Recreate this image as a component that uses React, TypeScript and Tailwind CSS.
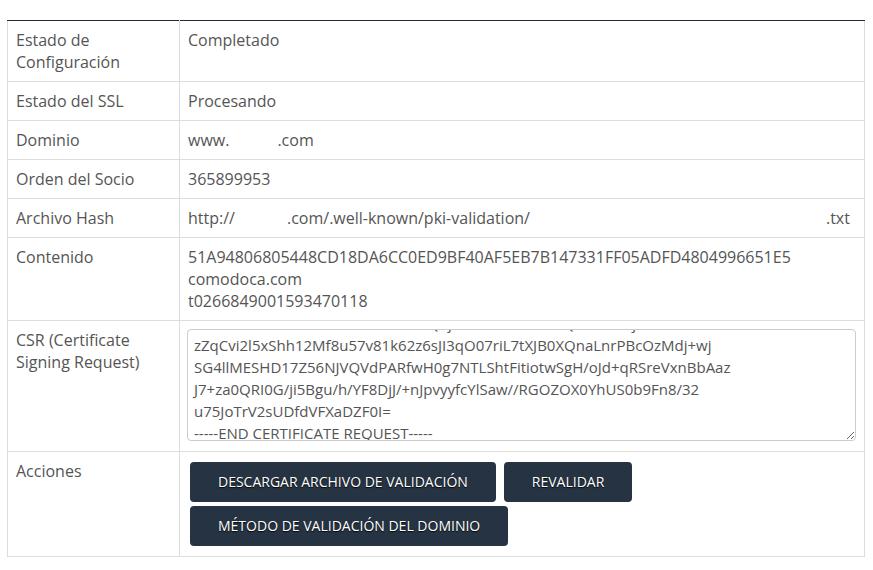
import { useEffect, useRef } from 'react';

const csrLines = [
  '-----BEGIN CERTIFICATE REQUEST-----',
  'MIICvDCCAaQCAQAwdzELMAkGA1UEBhMCRVMxDzANBgNVBAgMBk1hZHJpZDEPMA0G',
  'A1UEBwwGTWFkcmlkMRcwFQYDVQQKDA5FamVtcGxvIFMuTC4xFDASBgNVBAsMC0lU',
  'IERlcGFydG1lbnQxFzAVBgNVBAMMDnd3dy5leGFtcGxlLmNvbTCCASIwDQYJKoZI',
  'hvcNAQEBBQADggEPADCCAQoCggEBAMzR1k2d8Xq7PZs0Yb3nQpV9fWk4tLm2aH6j',
  'Ue1Ko8Gf3sNw0Rz5cY7iDqT2pLbXv9Mn4HjKa1SdF6gZeW3yRt8uIo0pQa2Bc4Ev',
  'Nm7xLk5Jh3Gf9Dd2Sa1Qw8Ee6Rr4Tt0Yy3Uu7Ii5Oo9Pp2Aa6Ss1Dd4Ff8Gg0Hh',
  'Jj3Kk7Ll1Zz5Xx9Cc2Vv6Bb0Nn4Mm8Qq1Ww5Ee9Rr3Tt7Yy1Uu5Ii9Oo3Pp7Aa1S',
  's5Dd9Ff3Gg7Hh1Jj5Kk9Ll3Zz7Xx1Cc5Vv9Bb3Nn7Mm1Qq5Ww9Ee3Rr7Tt1Yy5U',
  'u9Ii3Oo7Pp1Aa5Ss9Dd3Ff7Gg1Hh5Jj9Kk3Ll7Zz1Xx5Cc9Vv3Bb7Nn1Mm5Qq9W',
  'w3Ee7Rr1Tt5Yy9Uu3Ii7Oo1Pp5AgMBAAGgADANBgkqhkiG9w0BAQsFAAOCAQEAhG',
  'YVlXlVllvG0OGNoNZ0BcOlV0lBl0BQ0jOOAIXAEuxFAMQYHlYd0SjlZVkbGXKFAbG',
  'zZqCvi2l5xShh12Mf8u57v81k62z6sJI3qO07riL7tXJB0XQnaLnrPBcOzMdj+wj',
  'SG4llMESHD17Z56NJVQVdPARfwH0g7NTLShtFitiotwSgH/oJd+qRSreVxnBbAaz',
  'J7+za0QRI0G/ji5Bgu/h/YF8DjJ/+nJpvyyfcYlSaw//RGOZOX0YhUS0b9Fn8/32',
  'u75JoTrV2sUDfdVFXaDZF0I=',
  '-----END CERTIFICATE REQUEST-----',
];

const btn =
  'h-[40px] px-[28px] rounded-[4px] bg-[#253342] text-white text-[14px] font-medium [text-shadow:0_1px_1px_rgba(0,0,0,0.9)]';

function Row({ label, children }: { label: string; children: React.ReactNode }) {
  return (
    <tr className="border-b border-[#dddddd]">
      <td className="w-[172px] align-top px-2 py-2 border-r border-[#dddddd]">{label}</td>
      <td className="align-top px-2 py-2">{children}</td>
    </tr>
  );
}

export default function App() {
  const csrRef = useRef<HTMLTextAreaElement>(null);

  useEffect(() => {
    // keep the tail of the CSR in view, like the original page
    if (csrRef.current) {
      csrRef.current.scrollTop = 22 * (csrLines.length - 5) + 2;
    }
  }, []);

  return (
    <div className="min-h-[570px] bg-white pt-[20px] font-['Open_Sans',sans-serif] text-[16px] leading-[22px] text-[#555555]">
      <table className="ml-[7px] w-[858px] border-collapse border-x border-b border-[#dddddd]">
        <tbody className="border-t border-[#1f2d3d]">
          <Row label="Estado de Configuración">Completado</Row>
          <Row label="Estado del SSL">Procesando</Row>
          <Row label="Dominio">
            www.<span className="inline-block w-[48px]" />.com
          </Row>
          <Row label="Orden del Socio">365899953</Row>
          <Row label="Archivo Hash">
            http://<span className="inline-block w-[52px]" />.com/.well-known/pki-validation/
            <span className="inline-block w-[296px]" />.txt
          </Row>
          <Row label="Contenido">
            <div>51A94806805448CD18DA6CC0ED9BF40AF5EB7B147331FF05ADFD4804996651E5</div>
            <div>comodoca.com</div>
            <div>t0266849001593470118</div>
          </Row>
          <tr className="border-b border-[#dddddd]">
            <td className="w-[172px] align-top px-2 py-2 border-r border-[#dddddd]">
              CSR (Certificate Signing Request)
            </td>
            <td className="align-top px-2 pt-2 pb-[10px]">
              <textarea
                ref={csrRef}
                readOnly
                wrap="off"
                value={csrLines.join('\n')}
                className="block w-[669px] h-[112px] -ml-px border border-[#cccccc] rounded-[4px] px-[6px] py-[6px] overflow-hidden font-['Open_Sans',sans-serif] text-[15px] leading-[22px] text-[#555555] outline-none"
              />
            </td>
          </tr>
          <tr>
            <td className="w-[172px] align-top px-2 py-2 border-r border-[#dddddd]">Acciones</td>
            <td className="align-top px-2 py-2">
              <div className="flex flex-wrap gap-x-2 gap-y-1 py-[2px] pl-[2px]">
                <button className={btn}>DESCARGAR ARCHIVO DE VALIDACIÓN</button>
                <button className={btn}>REVALIDAR</button>
                <button className={btn}>MÉTODO DE VALIDACIÓN DEL DOMINIO</button>
              </div>
            </td>
          </tr>
        </tbody>
      </table>
    </div>
  );
}
